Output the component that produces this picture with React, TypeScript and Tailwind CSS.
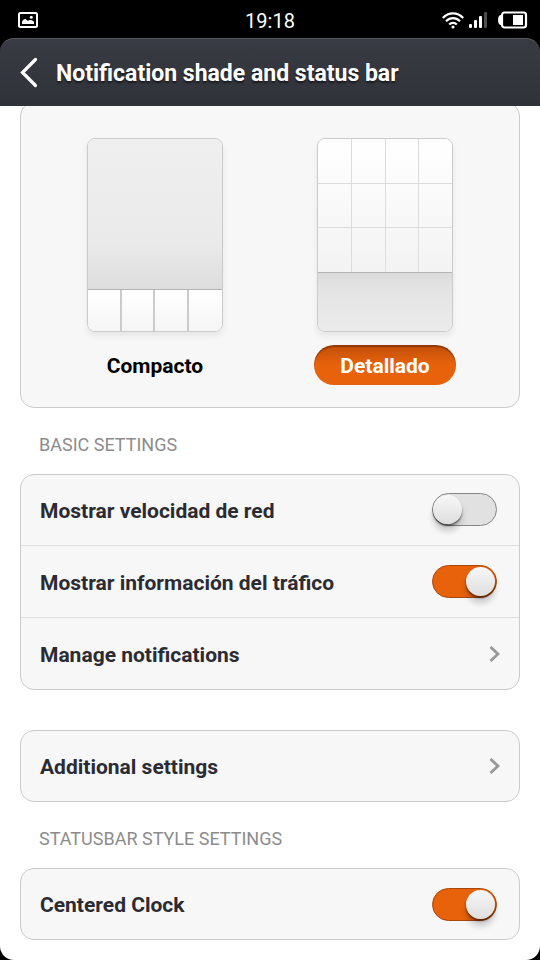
import { useId, useState } from "react";
import type { ReactNode } from "react";

type ShadeStyle = "compact" | "detailed";

const ROW_CLASS = "flex h-[72px] w-full items-center justify-between pl-[19px] pr-[19px] text-left";
const LABEL_CLASS = "pt-0.5 text-[21px] leading-7 font-bold text-[#2b2b33]";

function StatusBar() {
  return (
    <div className="grid h-[38px] grid-cols-3 items-center px-3 pt-0.5 text-white">
      <div className="pl-1.5">
        <svg width="20" height="16" viewBox="0 0 20 16" fill="none">
          <rect x="1" y="1" width="18" height="14" rx="1.5" stroke="currentColor" strokeWidth="2" />
          <path d="M4 12V9.6C5 8 6 7 7 7c1.3 0 1.800 1.700 3 1.700.8 0 1.200-.7 2.500-.7 1.800 0 3 1 3.500 2V12z" fill="currentColor" />
          <circle cx="13.300" cy="5.300" r="1.500" fill="currentColor" />
        </svg>
      </div>
      <span className="pt-0.5 text-center text-xl leading-6">19:18</span>
      <div className="flex items-center justify-end gap-[5px]">
        <svg width="22" height="17" viewBox="0 0 22 17" fill="none" stroke="currentColor" strokeWidth="2.200">
          <path d="M.8 5.900C6.500-.2 15.500-.2 21.200 5.900" />
          <path d="M4 9.300c4-4.200 10-4.200 14 0" />
          <path d="M7.200 12.600c2.200-2.300 5.400-2.300 7.600 0" />
          <circle cx="11" cy="15" r="1.600" fill="currentColor" stroke="none" />
        </svg>
        <svg width="18" height="16" viewBox="0 0 18 16" fill="currentColor">
          <rect x="0" y="12" width="3" height="4" rx="1" />
          <rect x="5" y="8" width="3" height="8" rx="1" />
          <rect x="10" y="4" width="3" height="12" rx="1" />
          <rect x="15" y="0" width="3" height="16" rx="1" fill="#4d4d4d" />
        </svg>
        <svg width="36" height="18" viewBox="-6 0 36 18" fill="none">
          <path d="M4 4H2.500C1 4 0 6.500 0 9s1 5 2.500 5H4z" fill="currentColor" />
          <rect x="4" y="1.500" width="24" height="15" rx="2.500" stroke="currentColor" strokeWidth="2.200" />
          <rect x="15" y="4" width="10" height="10" fill="currentColor" />
        </svg>
      </div>
    </div>
  );
}

function Header() {
  return (
    <header className="flex h-[68px] items-center rounded-t-[14px] border-t border-[#5a5b60] bg-linear-to-b from-[#393b44] to-[#303239] pl-5">
      <button type="button" aria-label="Back" className="text-white">
        <svg width="18" height="32" viewBox="0 0 18 32" fill="none">
          <path d="M15.500 2.500 2.500 15.500l13 13" stroke="currentColor" strokeWidth="3.200" strokeLinecap="round" />
        </svg>
      </button>
      <h1 className="ml-[18px] pt-0.5 text-[23px] leading-7 font-bold text-white [text-shadow:0_2px_2px_#0008]">
        Notification shade and status bar
      </h1>
    </header>
  );
}

function CompactPreview() {
  return (
    <div className="flex h-[194px] w-[136px] flex-col overflow-hidden rounded-lg border border-[#cbcbcb] shadow-[0_4px_6px_#00000012]">
      <div className="flex-1 border-b border-[#b5b5b5] bg-linear-to-b from-[#efefef] via-[#eaeaea] via-70% to-[#dddddd]" />
      <div className="grid h-[41px] grid-cols-4 divide-x-2 divide-[#cbcbcb] bg-linear-to-b from-white to-[#f5f5f5]">
        {[...Array(4)].map((_, i) => (
          <div key={i} />
        ))}
      </div>
    </div>
  );
}

function DetailedPreview() {
  return (
    <div className="flex h-[194px] w-[136px] flex-col overflow-hidden rounded-lg border border-[#cbcbcb] shadow-[0_4px_6px_#00000012]">
      <div className="grid flex-1 grid-cols-4 grid-rows-3 gap-px bg-linear-to-b from-white to-[#f3f3f3]">
        {[...Array(12)].map((_, i) => (
          <div key={i} className="outline outline-[#dcdcdc]" />
        ))}
      </div>
      <div className="h-[59px] border-t border-[#b5b5b5] bg-linear-to-b from-[#dcdcdc] via-[#e4e4e4] via-30% to-[#ebebeb]" />
    </div>
  );
}

interface StyleOptionProps {
  label: string;
  selected: boolean;
  onSelect: () => void;
  children: ReactNode;
}

function StyleOption({ label, selected, onSelect, children }: StyleOptionProps) {
  return (
    <label className="relative flex flex-col items-center gap-[13px]">
      <input type="radio" name="shade-style" checked={selected} onChange={onSelect} className="sr-only" />
      {children}
      <span
        className={`flex h-10 w-[142px] items-center justify-center rounded-full pt-0.5 text-[21px] leading-7 font-bold ${
          selected
            ? "bg-[#e8620c] bg-linear-to-b from-[#c04f09] to-[#e8620c] to-50% text-white shadow-[inset_0_2px_1px_#8f3a06]"
            : "text-black"
        }`}
      >
        {label}
      </span>
    </label>
  );
}

function Card({ children }: { children: ReactNode }) {
  return (
    <div className="overflow-hidden rounded-[14px] border border-[#cbcbcb] bg-[#f7f7f7]">
      {children}
    </div>
  );
}

function SectionTitle({ children }: { children: ReactNode }) {
  return (
    <h2 className="flex h-[66px] items-center pt-2 pl-[19px] text-lg leading-6 text-[#8c8c8c]">{children}</h2>
  );
}

function ToggleRow({ label, defaultOn }: { label: string; defaultOn: boolean }) {
  const id = useId();
  const [on, setOn] = useState(defaultOn);

  return (
    <div className={ROW_CLASS}>
      <label htmlFor={id} className={LABEL_CLASS}>
        {label}
      </label>
      <input
        id={id}
        type="checkbox"
        role="switch"
        checked={on}
        onChange={(e) => setOn(e.target.checked)}
        className="mr-[3px] flex h-[33px] w-[65px] appearance-none items-center justify-start rounded-full border border-[#858585] bg-[#e1e1e1] before:size-[29px] before:rounded-full before:bg-linear-to-b before:from-[#f8f8f8] before:to-[#dedede] before:shadow-[0_2px_2px_#00000080,0_7px_6px_#00000030] checked:justify-end checked:border-[#a8470a] checked:bg-[#e8620c] checked:pr-px"
      />
    </div>
  );
}

function LinkRow({ label }: { label: string }) {
  return (
    <button type="button" className={ROW_CLASS}>
      <span className={LABEL_CLASS}>{label}</span>
      <svg width="11" height="18" viewBox="0 0 11 18" fill="none">
        <path d="m1.500 2 7.500 7-7.500 7" stroke="#979797" strokeWidth="2.800" />
      </svg>
    </button>
  );
}

export default function App() {
  const [shadeStyle, setShadeStyle] = useState<ShadeStyle>("detailed");

  return (
    <div className="flex min-h-screen flex-col bg-black font-[Roboto,'Noto_Sans',sans-serif]">
      <StatusBar />
      <Header />

      <main className="flex-1 overflow-hidden rounded-b-[14px] bg-white px-5 pb-5">
        {/* Shade style, scrolled slightly under the header */}
        <div className="-mt-1">
          <Card>
            <div className="grid grid-cols-2 px-[19px] pt-[35px] pb-[22px]">
              <StyleOption
                label="Compacto"
                selected={shadeStyle === "compact"}
                onSelect={() => setShadeStyle("compact")}
              >
                <CompactPreview />
              </StyleOption>
              <StyleOption
                label="Detallado"
                selected={shadeStyle === "detailed"}
                onSelect={() => setShadeStyle("detailed")}
              >
                <DetailedPreview />
              </StyleOption>
            </div>
          </Card>
        </div>

        <SectionTitle>BASIC SETTINGS</SectionTitle>
        <Card>
          <div className="-my-px divide-y divide-[#dedede]">
            <ToggleRow label="Mostrar velocidad de red" defaultOn={false} />
            <ToggleRow label="Mostrar información del tráfico" defaultOn />
            <LinkRow label="Manage notifications" />
          </div>
        </Card>

        <div className="mt-10">
          <Card>
            <div className="-my-px">
              <LinkRow label="Additional settings" />
            </div>
          </Card>
        </div>

        <SectionTitle>STATUSBAR STYLE SETTINGS</SectionTitle>
        <Card>
          <div className="-my-px">
            <ToggleRow label="Centered Clock" defaultOn />
          </div>
        </Card>
      </main>
    </div>
  );
}
